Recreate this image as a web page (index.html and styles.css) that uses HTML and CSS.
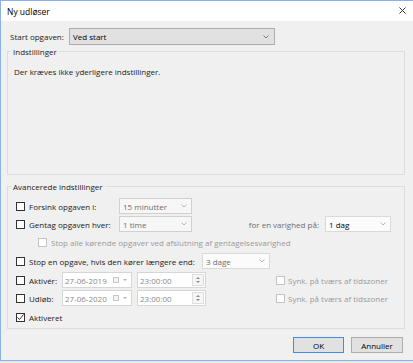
FILE: index.html
```html
<!DOCTYPE html>
<html lang="da">
<head>
<meta charset="utf-8">
<title>Ny udløser</title>
<link rel="stylesheet" href="styles.css">
</head>
<body>
<div class="dialog">
  <div class="titlebar">
    <span class="title">Ny udløser</span>
    <svg class="close" width="7" height="7" viewBox="0 0 7 7"><path d="M0.5 0.5 L6.5 6.5 M6.5 0.5 L0.5 6.5" stroke="#333" stroke-width="1" fill="none"/></svg>
  </div>
  <div class="content">
    <div class="start-row">
      <span class="start-label">Start opgaven:</span>
      <div class="combo main"><span class="combo-text">Ved start</span><svg class="chev" width="6" height="4" viewBox="0 0 6 4"><path d="M0.5 0.5 L3 3 L5.5 0.5" stroke="#7a7a7a" fill="none"/></svg></div>
    </div>

    <fieldset class="group settings">
      <legend>Indstillinger</legend>
      <p class="info">Der kræves ikke yderligere indstillinger.</p>
    </fieldset>

    <fieldset class="group advanced">
      <legend>Avancerede indstillinger</legend>
      <div class="rows">
        <div class="row">
          <span class="cb"></span><span class="lbl w90">Forsink opgaven i:</span>
          <div class="combo dis w73"><span class="combo-text">15 minutter</span><svg class="chev" width="6" height="4" viewBox="0 0 6 4"><path d="M0.5 0.5 L3 3 L5.5 0.5" stroke="#b5b5b5" fill="none"/></svg></div>
        </div>
        <div class="row">
          <span class="cb"></span><span class="lbl w90">Gentag opgaven hver:</span>
          <div class="combo dis w73"><span class="combo-text">1 time</span><svg class="chev" width="6" height="4" viewBox="0 0 6 4"><path d="M0.5 0.5 L3 3 L5.5 0.5" stroke="#b5b5b5" fill="none"/></svg></div>
          <span class="lbl-right">for en varighed på:</span>
          <div class="combo edit w66"><span class="combo-text dark">1 dag</span><svg class="chev" width="6" height="4" viewBox="0 0 6 4"><path d="M0.5 0.5 L3 3 L5.5 0.5" stroke="#b5b5b5" fill="none"/></svg></div>
        </div>
        <div class="row indent">
          <span class="cb off"></span><span class="lbl faint">Stop alle kørende opgaver ved afslutning af gentagelsesvarighed</span>
        </div>
        <div class="row gap1">
          <span class="cb"></span><span class="lbl w173">Stop en opgave, hvis den kører længere end:</span>
          <div class="combo edit w68"><span class="combo-text">3 dage</span><svg class="chev" width="6" height="4" viewBox="0 0 6 4"><path d="M0.5 0.5 L3 3 L5.5 0.5" stroke="#b5b5b5" fill="none"/></svg></div>
        </div>
        <div class="row gap1">
          <span class="cb"></span><span class="lbl w33">Aktivér:</span>
          <div class="field date"><span class="ftext">27-06-2019</span><span class="cal"></span><span class="tri"></span></div>
          <div class="field time"><span class="ftext">23:00:00</span><span class="spin"><span class="up"></span><span class="down"></span></span></div>
          <span class="cb off sync"></span><span class="lbl faint">Synk. på tværs af tidszoner</span>
        </div>
        <div class="row">
          <span class="cb"></span><span class="lbl w33">Udløb:</span>
          <div class="field date"><span class="ftext">27-06-2020</span><span class="cal"></span><span class="tri"></span></div>
          <div class="field time"><span class="ftext">23:00:00</span><span class="spin"><span class="up"></span><span class="down"></span></span></div>
          <span class="cb off sync"></span><span class="lbl faint">Synk. på tværs af tidszoner</span>
        </div>
        <div class="row gap1">
          <span class="cb checked"><svg width="9" height="9" viewBox="0 0 9 9"><path d="M1.5 4.5 L3.5 6.5 L7.5 1.5" stroke="#333" stroke-width="1" fill="none"/></svg></span><span class="lbl">Aktiveret</span>
        </div>
      </div>
    </fieldset>

    <div class="buttons">
      <button class="btn focus">OK</button>
      <button class="btn">Annuller</button>
    </div>
  </div>
</div>
</body>
</html>
```

FILE: styles.css
```css
* { box-sizing: border-box; }
html, body { margin: 0; padding: 0; }
body {
  background: #e6e6e6;
  font-family: "Open Sans", "Noto Sans", sans-serif;
  font-size: 8px;
  color: #1a1a1a;
  height: 363px;
  overflow: hidden;
}
.dialog {
  width: 413px;
  height: 361px;
  border: 1px solid #8cb0ea;
  border-right: none;
  background: #f0f0f0;
  display: flex;
  flex-direction: column;
}
.titlebar {
  height: 20px;
  flex: none;
  background: #fff;
  display: flex;
  align-items: center;
  justify-content: space-between;
  padding: 0 7px 0 6px;
}
.title { color: #000; font-size: 8.5px; }
.close { margin-top: -1px; }
.content {
  flex: 1;
  display: flex;
  flex-direction: column;
  padding: 7px 8px 0 6px;
}
.start-row {
  display: flex;
  align-items: center;
  height: 17px;
  padding-left: 3px;
}
.start-label { width: 59px; }
.combo {
  height: 16px;
  display: flex;
  align-items: center;
  justify-content: space-between;
  padding: 0 4px 0 3px;
  border: 1px solid #d0d0d0;
  background: #f7f7f7;
}
.combo.main {
  width: 206px;
  height: 17px;
  background: #e1e1e1;
  border-color: #adadad;
  color: #000;
  padding-right: 5px;
}
.combo.dis .combo-text { color: #6d6d6d; }
.combo.edit { background: #fbfbfb; border-color: #dadada; }
.combo.edit .combo-text { color: #6d6d6d; }
.combo.edit .combo-text.dark { color: #000; }
.w73 { width: 73px; }
.w66 { width: 66px; }
.w68 { width: 68px; }
.group {
  margin: 0;
  border: 1px solid #dcdcdc;
  padding: 0 3px;
}
.group legend {
  padding: 0 2px;
  color: #1a1a1a;
}
.settings {
  margin-top: 1px;
  height: 129px;
}
.info {
  margin: 9px 0 0 3px;
}
.advanced {
  margin-top: 6px;
  height: 148px;
}
.rows {
  display: flex;
  flex-direction: column;
  padding: 5px 0 0 5px;
}
.row {
  height: 18px;
  display: flex;
  align-items: center;
}
.row.gap1 { margin-top: 1px; }
.row.indent { padding-left: 22px; }
.cb {
  width: 9px;
  height: 9px;
  flex: none;
  border: 1px solid #333;
  background: #fff;
  margin-right: 4px;
  display: flex;
}
.cb.off { border-color: #c4c4c4; }
.cb.sync { margin-left: 70px; margin-right: 3px; }
.cb svg { margin: -1px; }
.lbl { white-space: nowrap; }
.lbl.faint { color: #9a9a9a; }
.w90 { width: 90px; flex: none; }
.w173 { width: 173px; flex: none; }
.w33 { width: 33px; flex: none; }
.lbl-right {
  width: 127px;
  text-align: right;
  margin-right: 6px;
  color: #6d6d6d;
  white-space: nowrap;
}
.field {
  height: 16px;
  border: 1px solid #d6d6d6;
  background: #fff;
  display: flex;
  align-items: center;
  padding-left: 2px;
}
.ftext { color: #8a8a8a; flex: 1; }
.date { width: 70px; margin-right: 5px; padding-right: 4px; }
.cal {
  width: 6px;
  height: 6px;
  border: 1px solid #c8c8c8;
  background: #f4f4f4;
  margin-right: 4px;
}
.tri {
  width: 0;
  height: 0;
  border-left: 2px solid transparent;
  border-right: 2px solid transparent;
  border-top: 2px solid #b0b0b0;
}
.time { width: 69px; padding-right: 1px; }
.spin {
  width: 12px;
  height: 12px;
  border: 1px solid #dedede;
  background: #f6f6f6;
  display: flex;
  flex-direction: column;
  align-items: center;
  justify-content: space-around;
  padding: 1px 0;
}
.up, .down {
  width: 0;
  height: 0;
  border-left: 2px solid transparent;
  border-right: 2px solid transparent;
}
.up { border-bottom: 2px solid #8a8a8a; }
.down { border-top: 2px solid #8a8a8a; }
.buttons {
  display: flex;
  justify-content: flex-end;
  gap: 7px;
  margin-top: 8px;
  padding-right: 2px;
}
.btn {
  font: inherit;
  color: #000;
  height: 16px;
  width: 52px;
  padding: 0;
  border: 1px solid #adadad;
  background: #e1e1e1;
}
.btn.focus { width: 51px; border-color: #3c8ee6; }
```
